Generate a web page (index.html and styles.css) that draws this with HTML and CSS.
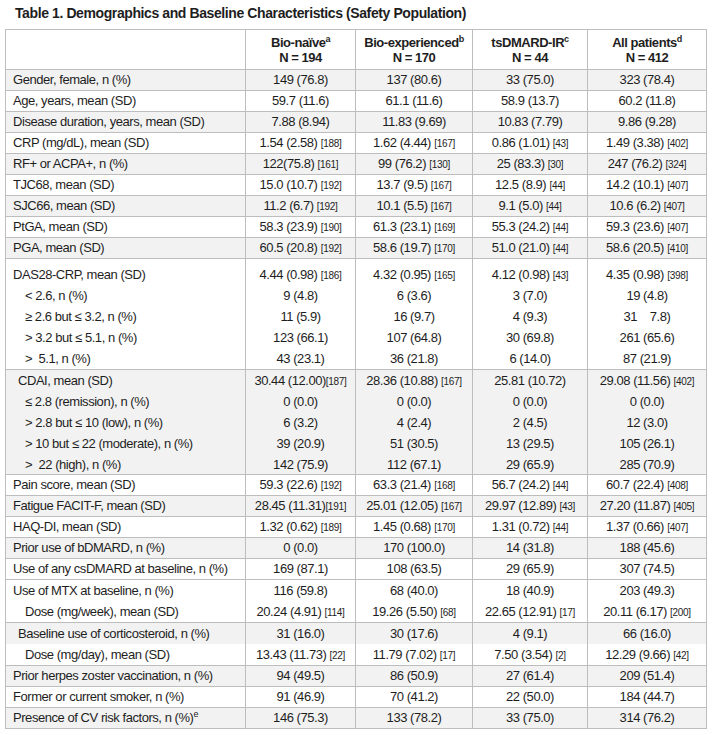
FILE: index.html
```html
<!DOCTYPE html>
<html>
<head>
<meta charset="utf-8">
<link rel="stylesheet" href="styles.css">
</head>
<body>
<div class="title">Table 1. Demographics and Baseline Characteristics (Safety Population)</div>
<table class="tbl">
<colgroup><col class="c1"><col class="c2"><col class="c3"><col class="c4"><col class="c5"></colgroup>
<thead>
<tr class="hd"><th></th><th>Bio-naïve<sup>a</sup><br>N = 194</th><th>Bio-experienced<sup>b</sup><br>N = 170</th><th>tsDMARD-IR<sup>c</sup><br>N = 44</th><th>All patients<sup>d</sup><br>N = 412</th></tr>
</thead>
<tbody>
<tr class="g"><td>Gender, female, n (%)</td><td>149 (76.8)</td><td>137 (80.6)</td><td>33 (75.0)</td><td>323 (78.4)</td></tr>
<tr><td>Age, years, mean (SD)</td><td>59.7 (11.6)</td><td>61.1 (11.6)</td><td>58.9 (13.7)</td><td>60.2 (11.8)</td></tr>
<tr class="g"><td>Disease duration, years, mean (SD)</td><td>7.88 (8.94)</td><td>11.83 (9.69)</td><td>10.83 (7.79)</td><td>9.86 (9.28)</td></tr>
<tr><td>CRP (mg/dL), mean (SD)</td><td>1.54 (2.58) <span class="n">[188]</span></td><td>1.62 (4.44) <span class="n">[167]</span></td><td>0.86 (1.01) <span class="n">[43]</span></td><td>1.49 (3.38) <span class="n">[402]</span></td></tr>
<tr class="g"><td>RF+ or ACPA+, n (%)</td><td>122(75.8) <span class="n">[161]</span></td><td>99 (76.2) <span class="n">[130]</span></td><td>25 (83.3) <span class="n">[30]</span></td><td>247 (76.2) <span class="n">[324]</span></td></tr>
<tr><td>TJC68, mean (SD)</td><td>15.0 (10.7) <span class="n">[192]</span></td><td>13.7 (9.5) <span class="n">[167]</span></td><td>12.5 (8.9) <span class="n">[44]</span></td><td>14.2 (10.1) <span class="n">[407]</span></td></tr>
<tr class="g"><td>SJC66, mean (SD)</td><td>11.2 (6.7) <span class="n">[192]</span></td><td>10.1 (5.5) <span class="n">[167]</span></td><td>9.1 (5.0) <span class="n">[44]</span></td><td>10.6 (6.2) <span class="n">[407]</span></td></tr>
<tr><td>PtGA, mean (SD)</td><td>58.3 (23.9) <span class="n">[190]</span></td><td>61.3 (23.1) <span class="n">[169]</span></td><td>55.3 (24.2) <span class="n">[44]</span></td><td>59.3 (23.6) <span class="n">[407]</span></td></tr>
<tr class="g"><td>PGA, mean (SD)</td><td>60.5 (20.8) <span class="n">[192]</span></td><td>58.6 (19.7) <span class="n">[170]</span></td><td>51.0 (21.0) <span class="n">[44]</span></td><td>58.6 (20.5) <span class="n">[410]</span></td></tr>
<tr class="grp das">
<td><div class="ln">DAS28-CRP, mean (SD)</div><div class="ln ind">&lt; 2.6, n (%)</div><div class="ln ind">≥ 2.6 but ≤ 3.2, n (%)</div><div class="ln ind">&gt; 3.2 but ≤ 5.1, n (%)</div><div class="ln ind">&gt;&nbsp; 5.1, n (%)</div></td>
<td><div class="ln">4.44 (0.98) <span class="n">[186]</span></div><div class="ln">9 (4.8)</div><div class="ln">11 (5.9)</div><div class="ln">123 (66.1)</div><div class="ln">43 (23.1)</div></td>
<td><div class="ln">4.32 (0.95) <span class="n">[165]</span></div><div class="ln">6 (3.6)</div><div class="ln">16 (9.7)</div><div class="ln">107 (64.8)</div><div class="ln">36 (21.8)</div></td>
<td><div class="ln">4.12 (0.98) <span class="n">[43]</span></div><div class="ln">3 (7.0)</div><div class="ln">4 (9.3)</div><div class="ln">30 (69.8)</div><div class="ln">6 (14.0)</div></td>
<td><div class="ln">4.35 (0.98) <span class="n">[398]</span></div><div class="ln">19 (4.8)</div><div class="ln">31&nbsp;&nbsp;&nbsp; 7.8)</div><div class="ln">261 (65.6)</div><div class="ln">87 (21.9)</div></td>
</tr>
<tr class="grp cdai g">
<td><div class="ln sub">CDAI, mean (SD)</div><div class="ln ind">≤ 2.8 (remission), n (%)</div><div class="ln ind">&gt; 2.8 but ≤ 10 (low), n (%)</div><div class="ln ind">&gt; 10 but ≤ 22 (moderate), n (%)</div><div class="ln ind">&gt;&nbsp; 22 (high), n (%)</div></td>
<td><div class="ln">30.44 (12.00)<span class="n">[187]</span></div><div class="ln">0 (0.0)</div><div class="ln">6 (3.2)</div><div class="ln">39 (20.9)</div><div class="ln">142 (75.9)</div></td>
<td><div class="ln">28.36 (10.88) <span class="n">[167]</span></div><div class="ln">0 (0.0)</div><div class="ln">4 (2.4)</div><div class="ln">51 (30.5)</div><div class="ln">112 (67.1)</div></td>
<td><div class="ln">25.81 (10.72)</div><div class="ln">0 (0.0)</div><div class="ln">2 (4.5)</div><div class="ln">13 (29.5)</div><div class="ln">29 (65.9)</div></td>
<td><div class="ln">29.08 (11.56) <span class="n">[402]</span></div><div class="ln">0 (0.0)</div><div class="ln">12 (3.0)</div><div class="ln">105 (26.1)</div><div class="ln">285 (70.9)</div></td>
</tr>
<tr><td>Pain score, mean (SD)</td><td>59.3 (22.6) <span class="n">[192]</span></td><td>63.3 (21.4) <span class="n">[168]</span></td><td>56.7 (24.2) <span class="n">[44]</span></td><td>60.7 (22.4) <span class="n">[408]</span></td></tr>
<tr class="g"><td>Fatigue FACIT-F, mean (SD)</td><td>28.45 (11.31)<span class="n">[191]</span></td><td>25.01 (12.05) <span class="n">[167]</span></td><td>29.97 (12.89) <span class="n">[43]</span></td><td>27.20 (11.87) <span class="n">[405]</span></td></tr>
<tr><td>HAQ-DI, mean (SD)</td><td>1.32 (0.62) <span class="n">[189]</span></td><td>1.45 (0.68) <span class="n">[170]</span></td><td>1.31 (0.72) <span class="n">[44]</span></td><td>1.37 (0.66) <span class="n">[407]</span></td></tr>
<tr class="g"><td>Prior use of bDMARD, n (%)</td><td>0 (0.0)</td><td>170 (100.0)</td><td>14 (31.8)</td><td>188 (45.6)</td></tr>
<tr><td>Use of any csDMARD at baseline, n (%)</td><td>169 (87.1)</td><td>108 (63.5)</td><td>29 (65.9)</td><td>307 (74.5)</td></tr>
<tr class="grp">
<td><div class="ln">Use of MTX at baseline, n (%)</div><div class="ln ind">Dose (mg/week), mean (SD)</div></td>
<td><div class="ln">116 (59.8)</div><div class="ln">20.24 (4.91) <span class="n">[114]</span></div></td>
<td><div class="ln">68 (40.0)</div><div class="ln">19.26 (5.50) <span class="n">[68]</span></div></td>
<td><div class="ln">18 (40.9)</div><div class="ln">22.65 (12.91) <span class="n">[17]</span></div></td>
<td><div class="ln">203 (49.3)</div><div class="ln">20.11 (6.17) <span class="n">[200]</span></div></td>
</tr>
<tr class="grp">
<td><div class="ln sub shade">Baseline use of corticosteroid, n (%)</div><div class="ln ind">Dose (mg/day), mean (SD)</div></td>
<td><div class="ln shade">31 (16.0)</div><div class="ln">13.43 (11.73) <span class="n">[22]</span></div></td>
<td><div class="ln shade">30 (17.6)</div><div class="ln">11.79 (7.02) <span class="n">[17]</span></div></td>
<td><div class="ln shade">4 (9.1)</div><div class="ln">7.50 (3.54) <span class="n">[2]</span></div></td>
<td><div class="ln shade">66 (16.0)</div><div class="ln">12.29 (9.66) <span class="n">[42]</span></div></td>
</tr>
<tr class="g"><td>Prior herpes zoster vaccination, n (%)</td><td>94 (49.5)</td><td>86 (50.9)</td><td>27 (61.4)</td><td>209 (51.4)</td></tr>
<tr><td>Former or current smoker, n (%)</td><td>91 (46.9)</td><td>70 (41.2)</td><td>22 (50.0)</td><td>184 (44.7)</td></tr>
<tr class="g"><td>Presence of CV risk factors, n (%)<sup>e</sup></td><td>146 (75.3)</td><td>133 (78.2)</td><td>33 (75.0)</td><td>314 (76.2)</td></tr>
</tbody>
</table>
</body>
</html>
```
FILE: styles.css
```css
html, body {
  margin: 0;
  padding: 0;
  background: #ffffff;
}
body {
  font-family: "Liberation Sans", Arial, sans-serif;
  font-size: 13px;
  letter-spacing: -0.45px;
  color: #1e1e1e;
}
.title {
  font-weight: bold;
  font-size: 14px;
  letter-spacing: -0.4px;
  height: 29px;
  line-height: 26px;
  padding-left: 15px;
}
.tbl {
  margin-left: 5px;
  width: 702px;
  border-collapse: collapse;
  table-layout: fixed;
}
.c1 { width: 240px; }
.c2 { width: 110px; }
.c3 { width: 117px; }
.c4 { width: 115px; }
.c5 { width: 119px; }
.tbl th, .tbl td {
  border: 1px solid #bdbdbd;
  padding: 0;
  vertical-align: top;
}
.tbl th {
  height: 29px;
  line-height: 15px;
  padding: 5px 0 4px;
  font-weight: bold;
  text-align: center;
}
.tbl td {
  height: 20px;
  line-height: 20px;
  text-align: center;
  white-space: nowrap;
}
.tbl td:first-child {
  text-align: left;
  padding-left: 7px;
}
.tbl .grp td:first-child { padding-left: 0; }
.g td { background: #f2f2f2; }
.ln {
  height: 21px;
  line-height: 21px;
}
.cdai .ln:last-child { height: 20px; }
.grp td:first-child .ln { padding-left: 7px; }
.grp td:first-child .ln.sub { padding-left: 12px; }
.grp td:first-child .ln.ind { padding-left: 19px; }
.das td { padding-top: 5px; }
.shade { background: #f2f2f2; }
.n {
  font-size: 10px;
  line-height: 1;
  letter-spacing: -0.3px;
}
sup {
  font-size: 9px;
  line-height: 0;
  vertical-align: 5px;
}
```
